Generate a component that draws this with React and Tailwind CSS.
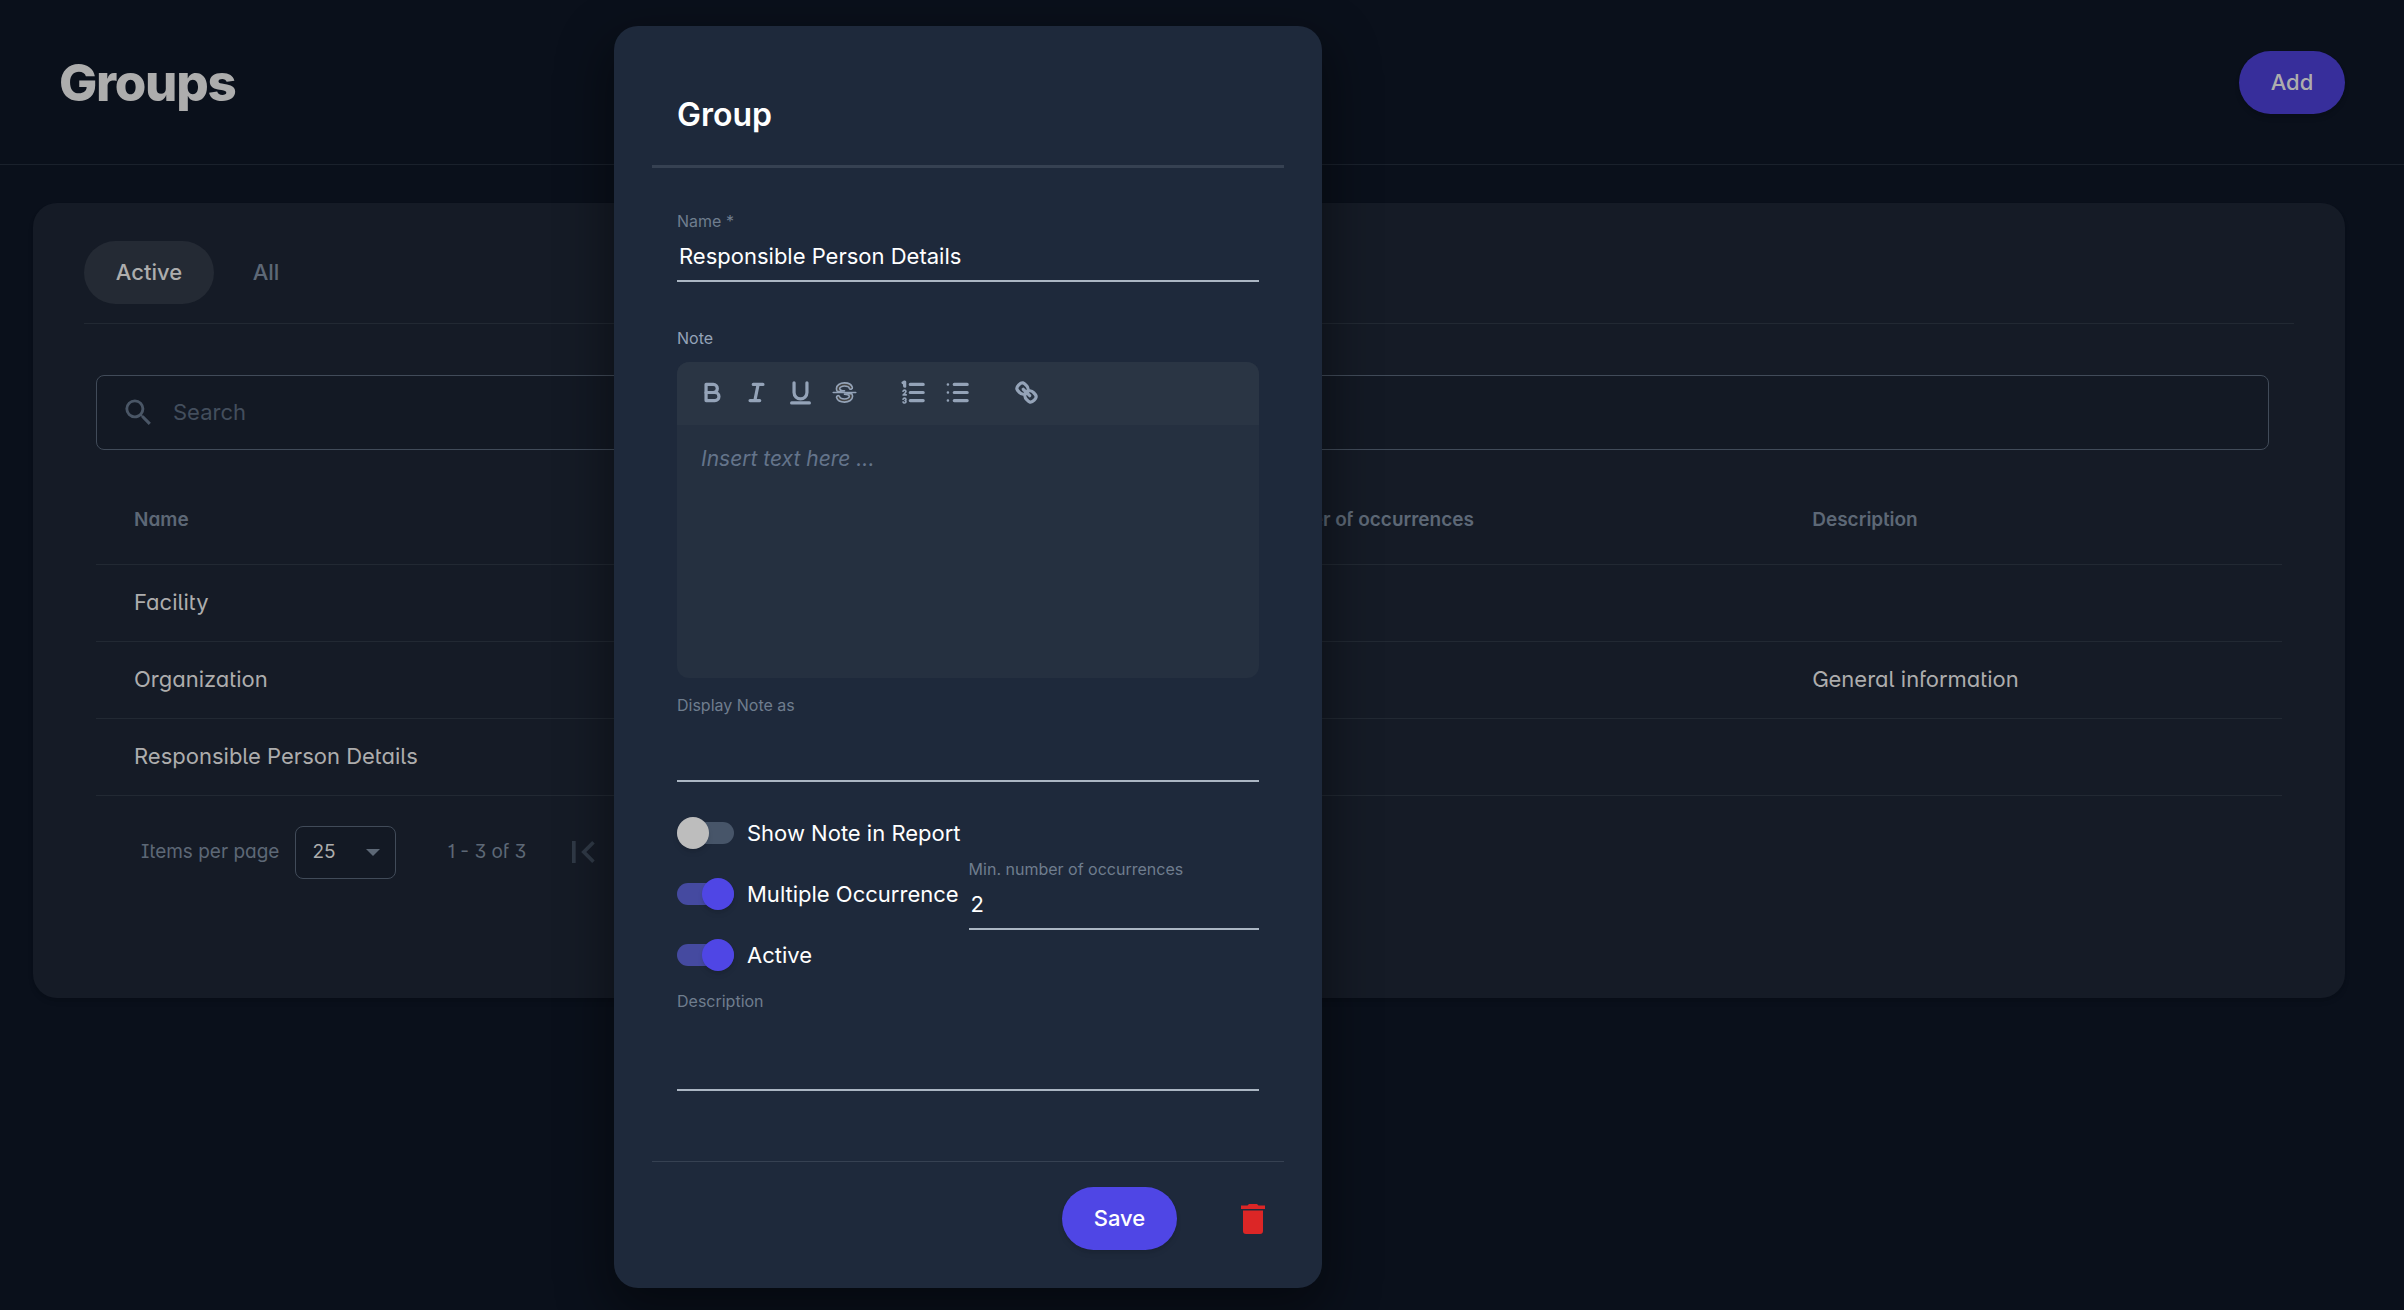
import { useId } from "react";
import { MdSearch, MdFirstPage } from "react-icons/md";

const rows = [
  { name: "Facility", occurrences: "", description: "" },
  { name: "Organization", occurrences: "", description: "General information" },
  { name: "Responsible Person Details", occurrences: "2", description: "" },
];

function ToolIcon({ label, children }) {
  return (
    <button type="button" aria-label={label} className="flex h-9 w-11 items-center justify-center">
      <svg viewBox="0 0 18 18" className="size-[29px] fill-none stroke-[#94a3b8] stroke-2 [stroke-linecap:round] [stroke-linejoin:round]">
        {children}
      </svg>
    </button>
  );
}

function EditorToolbar() {
  return (
    <div className="flex h-[63px] items-center bg-[#2a3544] px-[13px] pb-0.5">
      <ToolIcon label="Bold">
        <path d="M5,4H9.5A2.5,2.5,0,0,1,12,6.5v0A2.5,2.5,0,0,1,9.5,9H5A0,0,0,0,1,5,9V4A0,0,0,0,1,5,4Z" />
        <path d="M5,9h5.500A2.5,2.5,0,0,1,13,11.500v0A2.5,2.5,0,0,1,10.500,14H5a0,0,0,0,1,0,0V9A0,0,0,0,1,5,9Z" />
      </ToolIcon>
      <ToolIcon label="Italic">
        <path d="M7,4H13M5,14H11M8,14L10,4" />
      </ToolIcon>
      <ToolIcon label="Underline">
        <path d="M5,3V9a4.012,4.012,0,0,0,4,4H9a4.012,4.012,0,0,0,4-4V3" />
        <rect x="3" y="15" width="12" height="1" rx="0.5" className="fill-[#94a3b8] stroke-1" />
      </ToolIcon>
      <ToolIcon label="Strikethrough">
        <g className="fill-[#444] stroke-1">
          <path d="M9.007,8C6.542,7.791,6,7.519,6,6.500,6,5.792,7.283,5,9,5c1.571,0,2.765.679,2.969,1.309a1,1,0,0,0,1.900-.617C13.356,4.106,11.354,3,9,3,6.200,3,4,4.538,4,6.500a3.200,3.200,0,0,0,.5,1.843Z" />
          <path d="M8.984,10C11.457,10.208,12,10.479,12,11.500c0,.708-1.283,1.500-3,1.500-1.571,0-2.765-.679-2.969-1.309a1,1,0,1,0-1.900.617C4.644,13.894,6.646,15,9,15c2.800,0,5-1.538,5-3.500a3.200,3.200,0,0,0-.5-1.843Z" />
          <path d="M2,9H16" />
        </g>
      </ToolIcon>
      <div className="w-[25px]" />
      <ToolIcon label="Numbered list">
        <path d="M7,4H15M7,9H15M7,14H15" />
        <g className="stroke-1">
          <path className="fill-[#94a3b8]" d="M3.500,5.500A.5.5,0,0,1,3,5V3.085l-.276.138A.5.5,0,0,1,2.053,3c-.124-.247-.023-.324.224-.447l1-.5A.5.5,0,0,1,4,2.500v3A.5.5,0,0,1,3.500,5.500Z" />
          <path d="M4.500,10.500h-2c0-.234,1.850-1.076,1.850-2.234A.959.959,0,0,0,2.500,8.156" />
          <path d="M2.500,14.846a.959.959,0,0,0,1.850-.109A.7.7,0,0,0,3.750,14a.688.688,0,0,0,.6-.736.959.959,0,0,0-1.850-.109" />
        </g>
      </ToolIcon>
      <ToolIcon label="Bulleted list">
        <path d="M7,4H15M7,9H15M7,14H15" />
        <path className="stroke-[1.500]" d="M3,4H3.100M3,9H3.100M3,14H3.100" />
      </ToolIcon>
      <div className="w-[25px]" />
      <ToolIcon label="Link">
        <path d="M7,7L11,11" />
        <path d="M8.900,4.577a3.476,3.476,0,0,1,.36,4.679A3.476,3.476,0,0,1,4.577,8.900C3.185,7.500,2.035,6.400,4.217,4.217S7.500,3.185,8.900,4.577Z" />
        <path d="M13.423,9.100a3.476,3.476,0,0,0-4.679-.36,3.476,3.476,0,0,0,.36,4.679c1.392,1.392,2.500,2.542,4.679.36S14.815,10.500,13.423,9.100Z" />
      </ToolIcon>
    </div>
  );
}

function Field({ label, children }) {
  return (
    <label className="flex w-full flex-col text-[16px] leading-6 text-[#6f7d8e]">
      {label}
      {children}
    </label>
  );
}

function Toggle({ label, on }) {
  const id = useId();
  return (
    <div className="flex h-[61px] shrink-0 items-center gap-[13px]">
      <input
        id={id}
        type="checkbox"
        role="switch"
        defaultChecked={on}
        className="relative h-[22px] w-[57px] appearance-none rounded-full bg-[#475569] before:absolute before:-top-[5px] before:left-0 before:size-8 before:rounded-full before:bg-[#bdbdbd] before:shadow-md checked:bg-[#454aa0] checked:before:left-[25px] checked:before:bg-[#4f46e5]"
      />
      <label htmlFor={id} className="text-[22px] leading-8 whitespace-nowrap text-white">
        {label}
      </label>
    </div>
  );
}

function GroupDialog() {
  return (
    <form
      role="dialog"
      aria-labelledby="dialog-title"
      className="absolute inset-x-0 top-[26px] mx-auto flex w-[708px] -translate-x-[234px] flex-col rounded-3xl bg-[#1e293b] px-[38px] shadow-[0_20px_50px_8px_rgba(0,0,0,0.4)]"
    >
      <header className="border-b-3 border-[#364152] px-[25px] pt-[69px] pb-[30px]">
        <h2 id="dialog-title" className="text-[32px] leading-10 font-semibold text-white">Group</h2>
      </header>
      <div className="flex flex-col px-[25px] pt-[41px] pb-[70px]">
        <Field label="Name *">
          <input
            defaultValue="Responsible Person Details"
            className="h-[49px] border-b-2 border-[#abb6c3] px-0.5 pb-0.5 text-[22px] text-white outline-none"
          />
        </Field>
        <div className="mt-11 text-[16px] leading-6 text-[#94a3b8]">Note</div>
        <div className="mt-3 overflow-hidden rounded-xl bg-[#253040]">
          <EditorToolbar />
          <textarea
            aria-label="Note"
            placeholder="Insert text here ..."
            className="block h-[253px] w-full resize-none px-6 py-[18px] text-[21px] leading-8 text-white outline-none placeholder:text-[#64748b] placeholder:italic"
          />
        </div>
        <div className="mt-[15px]">
          <Field label="Display Note as">
            <input className="h-[65px] border-b-2 border-[#abb6c3] px-0.5 text-[22px] text-white outline-none" />
          </Field>
        </div>
        <div className="mt-5 flex flex-col">
          <Toggle label="Show Note in Report" />
          <div className="flex h-[61px] items-center gap-2.5">
            <Toggle label="Multiple Occurrence" on />
            <div className="min-w-0 flex-1">
              <Field label="Min. number of occurrences">
                <input
                  defaultValue="2"
                  className="h-[49px] w-full border-b-2 border-[#abb6c3] px-0.5 pb-0.5 text-[22px] text-white outline-none"
                />
              </Field>
            </div>
          </div>
          <Toggle label="Active" on />
        </div>
        <div className="mt-1">
          <Field label="Description">
            <input className="h-[78px] border-b-2 border-[#abb6c3] px-0.5 text-[22px] text-white outline-none" />
          </Field>
        </div>
      </div>
      <footer className="flex items-center justify-end gap-[54px] border-t border-[#364152] pt-[25px] pr-[9px] pb-[38px]">
        <button type="button" className="h-[63px] w-[115px] rounded-full bg-[#4f46e5] text-[22px] font-medium text-white shadow-md">
          Save
        </button>
        <button type="button" aria-label="Delete" className="flex size-[44px] items-center justify-center">
          <svg viewBox="0 0 24 30" className="h-[30px] w-6 fill-[#dc2626]">
            <path d="M0 1.500h6.500L8 0h8l1.500 1.500H24v3.500H0zM2 6.500h20V27a3 3 0 0 1-3 3H5a3 3 0 0 1-3-3z" />
          </svg>
        </button>
      </footer>
    </form>
  );
}

export default function App() {
  return (
    <div className="relative min-h-screen bg-[#0a101b] font-['Inter',sans-serif] text-[#adadad]">
      <header className="flex h-[165px] items-center justify-between border-b border-[#1a212c] px-[59px]">
        <h1 className="text-[51px] leading-none font-extrabold tracking-tight">Groups</h1>
        <button type="button" className="h-[63px] w-[106px] rounded-full bg-[#372e9b] text-[22px] font-medium shadow-md">
          Add
        </button>
      </header>
      <main className="mt-[38px] mr-[59px] ml-[33px] min-h-[795px] rounded-3xl bg-[#151b26] px-[51px] pt-[38px] shadow-md">
        <nav className="flex h-[83px] gap-[9px] border-b border-[#222933] text-[22px] font-medium">
          <button type="button" className="h-[63px] w-[130px] rounded-full bg-[#242a34]">Active</button>
          <button type="button" className="h-[63px] w-[86px] text-[#5d6876]">All</button>
        </nav>
        <div className="px-3 pt-[51px] [font-feature-settings:'salt']">
          <label className="mr-[13px] flex h-[75px] items-center gap-[17px] rounded-lg border border-[#414b59] bg-[#131924] px-6">
            <MdSearch className="size-[35px] text-[#4a5666]" />
            <input
              type="search"
              aria-label="Search"
              placeholder="Search"
              className="min-w-0 flex-1 text-[22px] outline-none [font-feature-settings:normal] placeholder:text-[#434e5d]"
            />
          </label>
          <table className="mt-[26px] w-full table-fixed text-left text-[22px]">
            <thead>
              <tr className="h-[88px] border-b border-[#222933] text-[19px] text-[#5d6876]">
                <th className="w-[38%] pl-[38px] font-semibold">Name</th>
                <th className="w-[39%] pl-[330px] font-semibold">Number of occurrences</th>
                <th className="pl-[33px] font-semibold">Description</th>
              </tr>
            </thead>
            <tbody>
              {rows.map((row) => (
                <tr key={row.name} className="h-[77px] border-b border-[#222933]">
                  <td className="pl-[38px]">{row.name}</td>
                  <td className="pl-[330px]">{row.occurrences}</td>
                  <td className="pl-[33px]">{row.description}</td>
                </tr>
              ))}
            </tbody>
          </table>
          <div className="flex h-[113px] items-center pl-[45px] text-[19px] text-[#5d6876]">
            <label htmlFor="page-size">Items per page</label>
            <div className="relative ml-4">
              <select
                id="page-size"
                defaultValue="25"
                className="h-[53px] w-[101px] appearance-none rounded-lg border border-[#414b59] bg-[#131924] px-4 text-[19px] text-[#adadad]"
              >
                <option>25</option>
                <option>50</option>
              </select>
              <svg viewBox="0 0 14 7" className="pointer-events-none absolute top-[23px] right-4 h-[7px] w-3.5 fill-[#5d6876]">
                <path d="M0 0h14L7 7z" />
              </svg>
            </div>
            <span className="ml-[51px]">1 - 3 of 3</span>
            <button type="button" aria-label="First page" className="ml-[35px]">
              <MdFirstPage className="size-11 text-[#303a47]" />
            </button>
          </div>
        </div>
      </main>
      <GroupDialog />
    </div>
  );
}
